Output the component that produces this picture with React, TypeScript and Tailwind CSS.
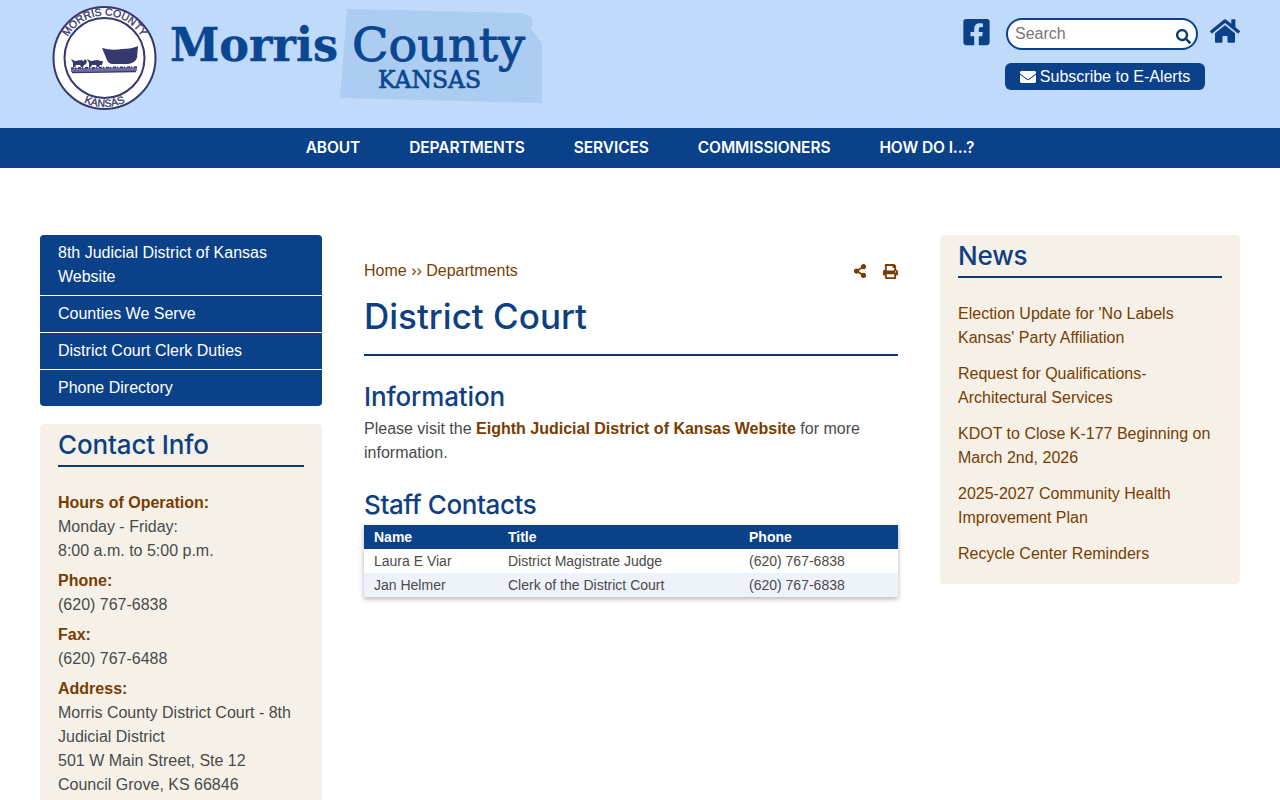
import { FaFacebookSquare, FaSearch, FaHome, FaEnvelope, FaShareAlt, FaPrint } from 'react-icons/fa';

const navItems = ['ABOUT', 'DEPARTMENTS', 'SERVICES', 'COMMISSIONERS', 'HOW DO I...?'];
const sideLinks = ['Counties We Serve', 'District Court Clerk Duties', 'Phone Directory'];
const news = [
  "Election Update for 'No Labels Kansas' Party Affiliation",
  'Request for Qualifications-Architectural Services',
  'KDOT to Close K-177 Beginning on March 2nd, 2026',
  '2025-2027 Community Health Improvement Plan',
  'Recycle Center Reminders',
];
const staff = [
  { name: 'Laura E Viar', title: 'District Magistrate Judge', phone: '(620) 767-6838' },
  { name: 'Jan Helmer', title: 'Clerk of the District Court', phone: '(620) 767-6838' },
];

function Logo() {
  return (
    <svg width="510" height="115" viewBox="0 0 510 115" className="block">
      <defs>
        <path id="sealTop" d="M 22 58 A 42.5 42.5 0 0 1 107 58" />
        <path id="sealBottom" d="M 15.5 58 A 49 49 0 0 0 113.5 58" />
      </defs>
      {/* state outline */}
      <polygon points="307,9 483,13 492,18 493,25 490,28 502,43 502,103 300,98" fill="#accdf1" />
      {/* seal */}
      <circle cx="64.5" cy="58" r="51" fill="#ffffff" stroke="#36386e" strokeWidth="2" />
      <circle cx="64.5" cy="58" r="40" fill="#ffffff" stroke="#36386e" strokeWidth="2" />
      <g fill="#36386e" stroke="#36386e" strokeWidth="0.35" fontFamily="'Liberation Sans', Arial, sans-serif" fontSize="10.5">
        <text>
          <textPath href="#sealTop" startOffset="50%" textAnchor="middle">MORRIS COUNTY</textPath>
        </text>
        <text>
          <textPath href="#sealBottom" startOffset="50%" textAnchor="middle">KANSAS</textPath>
        </text>
      </g>
      {/* wagon and oxen */}
      <path d="M62 48 Q72 51 82 49 Q92 49 98 46 L97 58 Q95 63 88 64 L72 64 Q68 63 67 60 Z" fill="#36386e" />
      <path d="M31 59 L35 61 L41 60 L44 61 L45 59 L47 61 L46 64 L44 65 L43 67 L41 67 L40 65 L36 65 L35 67 L33 67 L33 63 Z" fill="#36386e" />
      <path d="M47 59 L51 61 L57 60 L61 61 L63 61 L62 65 L60 65 L59 67 L57 67 L56 65 L52 65 L51 67 L49 67 L49 63 Z" fill="#36386e" />
      <path d="M31 70 L97 69" stroke="#6b6da3" strokeWidth="4" />
      <path d="M31 68 L97 67" stroke="#36386e" strokeWidth="1.5" strokeDasharray="3 1 1 2" />
      <path d="M32 72.5 L96 71.5" stroke="#36386e" strokeWidth="1.5" />
      {/* wordmark */}
      <g fill="#0b4692">
        <text x="130" y="61" fontFamily="'DejaVu Serif', serif" fontWeight="700" fontSize="47" stroke="#0b4692" strokeWidth="0.4" textLength="168" lengthAdjust="spacingAndGlyphs">Morris</text>
        <text x="312" y="61" fontFamily="'DejaVu Serif', serif" fontWeight="400" fontSize="47" stroke="#0b4692" strokeWidth="1" textLength="173" lengthAdjust="spacingAndGlyphs">County</text>
        <text x="338" y="88" fontFamily="'DejaVu Serif', serif" fontWeight="400" fontSize="24" stroke="#0b4692" strokeWidth="0.7" textLength="103" lengthAdjust="spacingAndGlyphs">KANSAS</text>
      </g>
    </svg>
  );
}

function SectionHeading({ children }: { children: string }) {
  return (
    <h2 className="font-['Inter',sans-serif] text-[26px] leading-[32px] tracking-[-0.15px] font-medium text-[#0e3f82] border-b-2 border-[#0b3a6e] pb-[3px]">
      <span className="relative top-[-1px]">{children}</span>
    </h2>
  );
}

export default function App() {
  return (
    <div className="h-[800px] overflow-hidden bg-white font-['Liberation_Sans',Arial,sans-serif] text-base leading-6 text-[#4a4a4a]">
      <header className="h-[128px] bg-[#bfdafb] flex justify-between pl-[40px] pr-[40px]">
        <Logo />
        <div className="w-[280px] flex flex-col items-center pt-[17px]">
          <div className="flex items-start w-full">
            <FaFacebookSquare className="w-[27px] h-[30px] text-[#0b4189] ml-[3px] shrink-0" />
            <div className="ml-[16px] mt-[1px] w-[192px] h-[32px] rounded-full border-2 border-[#0b4189] bg-white flex items-center justify-between pl-[7px] pr-[5px]">
              <span className="text-[#757575]">Search</span>
              <FaSearch className="w-[15px] h-[15px] text-[#0b3a6e] mt-[5px]" />
            </div>
            <FaHome className="ml-[12px] mt-[-1px] w-[30px] h-[30px] text-[#0b4189] shrink-0" />
          </div>
          <div className="mt-[13px] h-[27px] w-[200px] ml-[10px] rounded-md bg-[#0b4189] text-white flex items-center justify-center gap-[4px]">
            <FaEnvelope className="w-[16px] h-[16px]" />
            <span>Subscribe to E-Alerts</span>
          </div>
        </div>
      </header>

      <nav className="h-[40px] bg-[#0b4189] flex items-center justify-center gap-[49px] font-['Inter',sans-serif] text-[15.5px] font-semibold text-white tracking-[-0.1px]">
        {navItems.map((item) => (
          <span key={item}>{item}</span>
        ))}
      </nav>

      <main className="flex pl-[40px] pt-[67px]">
        <aside className="w-[282px] shrink-0">
          <div className="rounded-sm overflow-hidden bg-[#0b4189] text-white">
            <div className="px-[18px] pt-[6px] pb-[6px]">8th Judicial District of Kansas Website</div>
            {sideLinks.map((link) => (
              <div key={link} className="border-t border-white px-[18px] pt-[6px] pb-[6px]">{link}</div>
            ))}
          </div>

          <div className="mt-[18px] bg-[#f5f1e8] rounded-sm px-[18px] pt-[6px] pb-[16px]">
            <SectionHeading>Contact Info</SectionHeading>
            <div className="mt-[24px]">
              <div className="font-bold text-[#7a3c00]">Hours of Operation:</div>
              <div>Monday - Friday:</div>
              <div>8:00 a.m. to 5:00 p.m.</div>
              <div className="mt-[6px] font-bold text-[#7a3c00]">Phone:</div>
              <div>(620) 767-6838</div>
              <div className="mt-[6px] font-bold text-[#7a3c00]">Fax:</div>
              <div>(620) 767-6488</div>
              <div className="mt-[6px] font-bold text-[#7a3c00]">Address:</div>
              <div>Morris County District Court - 8th Judicial District</div>
              <div>501 W Main Street, Ste 12</div>
              <div>Council Grove, KS 66846</div>
            </div>
          </div>
        </aside>

        <section className="w-[534px] shrink-0 ml-[42px] pt-[24px]">
          <div className="flex items-center justify-between text-[#7a3c00]">
            <div>Home ›› Departments</div>
            <div className="flex items-center gap-[16px]">
              <FaShareAlt className="w-[14px] h-[14px]" />
              <FaPrint className="w-[15px] h-[15px]" />
            </div>
          </div>
          <h1 className="mt-[11px] pb-[16px] border-b-2 border-[#0b3a6e] font-['Inter',sans-serif] text-[35px] leading-[44px] font-medium text-[#0e3f82]">
            District Court
          </h1>
          <h2 className="mt-[25px] mb-[4px] font-['Inter',sans-serif] text-[26px] leading-[32px] tracking-[-0.15px] font-medium text-[#0e3f82]">Information</h2>
          <p>
            Please visit the <span className="font-bold text-[#7a3c00]">Eighth Judicial District of Kansas Website</span> for more information.
          </p>
          <h2 className="mt-[24px] font-['Inter',sans-serif] text-[26px] leading-[32px] tracking-[-0.4px] font-medium text-[#0e3f82]">Staff Contacts</h2>
          <table className="mt-[4px] w-full text-sm leading-6 shadow-[0_2px_5px_rgba(0,0,0,0.3)]">
            <thead>
              <tr className="bg-[#0b4189] text-white font-bold">
                <th className="text-left font-bold pl-[10px] w-[144px]">Name</th>
                <th className="text-left font-bold w-[241px]">Title</th>
                <th className="text-left font-bold">Phone</th>
              </tr>
            </thead>
            <tbody>
              {staff.map((row, i) => (
                <tr key={row.name} className={i % 2 === 1 ? 'bg-[#eef3fa]' : 'bg-white'}>
                  <td className="pl-[10px]">{row.name}</td>
                  <td>{row.title}</td>
                  <td>{row.phone}</td>
                </tr>
              ))}
            </tbody>
          </table>
        </section>

        <aside className="w-[300px] shrink-0 ml-[42px]">
          <div className="bg-[#f5f1e8] rounded-sm px-[18px] pt-[6px] pb-[18px]">
            <SectionHeading>News</SectionHeading>
            <div className="mt-[24px] flex flex-col gap-[12px] text-[#7a3c00]">
              {news.map((item) => (
                <div key={item}>{item}</div>
              ))}
            </div>
          </div>
        </aside>
      </main>
    </div>
  );
}
